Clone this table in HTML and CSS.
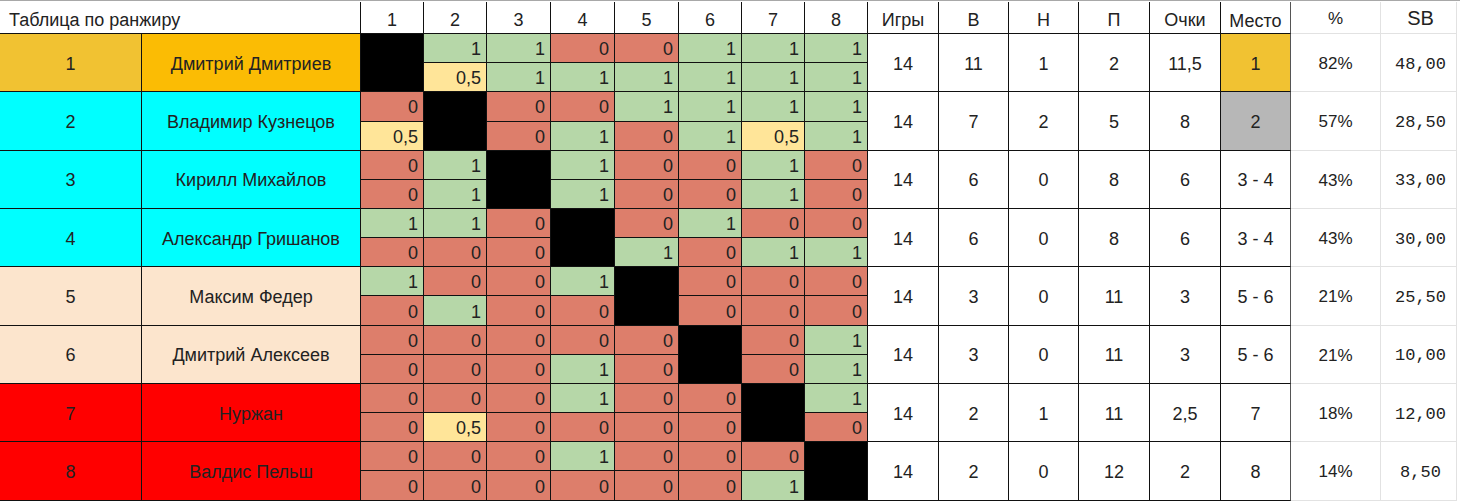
FILE: index.html
```html
<!DOCTYPE html>
<html lang="ru">
<head>
<meta charset="utf-8">
<title>Таблица по ранжиру</title>
<link rel="stylesheet" href="styles.css">
</head>
<body>
<div class="sheet">
  <div class="row hdr">
    <div class="c title">Таблица по ранжиру</div>
    <div class="c">1</div><div class="c">2</div><div class="c">3</div><div class="c">4</div>
    <div class="c">5</div><div class="c">6</div><div class="c">7</div><div class="c">8</div>
    <div class="c">Игры</div><div class="c">В</div><div class="c">Н</div><div class="c">П</div>
    <div class="c">Очки</div><div class="c place low">Место</div>
    <div class="c g">%</div><div class="c g big">SB</div>
  </div>

  <div class="row">
    <div class="c rank gold1">1</div><div class="c name gold2">Дмитрий Дмитриев</div>
    <div class="m blk"></div>
    <div class="m"><span class="s w">1</span><span class="s d">0,5</span></div>
    <div class="m"><span class="s w">1</span><span class="s w">1</span></div>
    <div class="m"><span class="s l">0</span><span class="s w">1</span></div>
    <div class="m"><span class="s l">0</span><span class="s w">1</span></div>
    <div class="m"><span class="s w">1</span><span class="s w">1</span></div>
    <div class="m"><span class="s w">1</span><span class="s w">1</span></div>
    <div class="m"><span class="s w">1</span><span class="s w">1</span></div>
    <div class="c">14</div><div class="c">11</div><div class="c">1</div><div class="c">2</div><div class="c">11,5</div>
    <div class="c place gold1">1</div><div class="c g">82%</div><div class="c g mono">48,00</div>
  </div>

  <div class="row">
    <div class="c rank cyan">2</div><div class="c name cyan">Владимир Кузнецов</div>
    <div class="m"><span class="s l">0</span><span class="s d">0,5</span></div>
    <div class="m blk"></div>
    <div class="m"><span class="s l">0</span><span class="s l">0</span></div>
    <div class="m"><span class="s l">0</span><span class="s w">1</span></div>
    <div class="m"><span class="s w">1</span><span class="s l">0</span></div>
    <div class="m"><span class="s w">1</span><span class="s w">1</span></div>
    <div class="m"><span class="s w">1</span><span class="s d">0,5</span></div>
    <div class="m"><span class="s w">1</span><span class="s w">1</span></div>
    <div class="c">14</div><div class="c">7</div><div class="c">2</div><div class="c">5</div><div class="c">8</div>
    <div class="c place silver">2</div><div class="c g">57%</div><div class="c g mono">28,50</div>
  </div>

  <div class="row">
    <div class="c rank cyan">3</div><div class="c name cyan">Кирилл Михайлов</div>
    <div class="m"><span class="s l">0</span><span class="s l">0</span></div>
    <div class="m"><span class="s w">1</span><span class="s w">1</span></div>
    <div class="m blk"></div>
    <div class="m"><span class="s w">1</span><span class="s w">1</span></div>
    <div class="m"><span class="s l">0</span><span class="s l">0</span></div>
    <div class="m"><span class="s l">0</span><span class="s l">0</span></div>
    <div class="m"><span class="s w">1</span><span class="s w">1</span></div>
    <div class="m"><span class="s l">0</span><span class="s l">0</span></div>
    <div class="c">14</div><div class="c">6</div><div class="c">0</div><div class="c">8</div><div class="c">6</div>
    <div class="c place">3 - 4</div><div class="c g">43%</div><div class="c g mono">33,00</div>
  </div>

  <div class="row">
    <div class="c rank cyan">4</div><div class="c name cyan">Александр Гришанов</div>
    <div class="m"><span class="s w">1</span><span class="s l">0</span></div>
    <div class="m"><span class="s w">1</span><span class="s l">0</span></div>
    <div class="m"><span class="s l">0</span><span class="s l">0</span></div>
    <div class="m blk"></div>
    <div class="m"><span class="s l">0</span><span class="s w">1</span></div>
    <div class="m"><span class="s w">1</span><span class="s l">0</span></div>
    <div class="m"><span class="s l">0</span><span class="s w">1</span></div>
    <div class="m"><span class="s l">0</span><span class="s w">1</span></div>
    <div class="c">14</div><div class="c">6</div><div class="c">0</div><div class="c">8</div><div class="c">6</div>
    <div class="c place">3 - 4</div><div class="c g">43%</div><div class="c g mono">30,00</div>
  </div>

  <div class="row">
    <div class="c rank peach">5</div><div class="c name peach">Максим Федер</div>
    <div class="m"><span class="s w">1</span><span class="s l">0</span></div>
    <div class="m"><span class="s l">0</span><span class="s w">1</span></div>
    <div class="m"><span class="s l">0</span><span class="s l">0</span></div>
    <div class="m"><span class="s w">1</span><span class="s l">0</span></div>
    <div class="m blk"></div>
    <div class="m"><span class="s l">0</span><span class="s l">0</span></div>
    <div class="m"><span class="s l">0</span><span class="s l">0</span></div>
    <div class="m"><span class="s l">0</span><span class="s l">0</span></div>
    <div class="c">14</div><div class="c">3</div><div class="c">0</div><div class="c">11</div><div class="c">3</div>
    <div class="c place">5 - 6</div><div class="c g">21%</div><div class="c g mono">25,50</div>
  </div>

  <div class="row">
    <div class="c rank peach">6</div><div class="c name peach">Дмитрий Алексеев</div>
    <div class="m"><span class="s l">0</span><span class="s l">0</span></div>
    <div class="m"><span class="s l">0</span><span class="s l">0</span></div>
    <div class="m"><span class="s l">0</span><span class="s l">0</span></div>
    <div class="m"><span class="s l">0</span><span class="s w">1</span></div>
    <div class="m"><span class="s l">0</span><span class="s l">0</span></div>
    <div class="m blk"></div>
    <div class="m"><span class="s l">0</span><span class="s l">0</span></div>
    <div class="m"><span class="s w">1</span><span class="s w">1</span></div>
    <div class="c">14</div><div class="c">3</div><div class="c">0</div><div class="c">11</div><div class="c">3</div>
    <div class="c place">5 - 6</div><div class="c g">21%</div><div class="c g mono">10,00</div>
  </div>

  <div class="row">
    <div class="c rank red">7</div><div class="c name red">Нуржан</div>
    <div class="m"><span class="s l">0</span><span class="s l">0</span></div>
    <div class="m"><span class="s l">0</span><span class="s d">0,5</span></div>
    <div class="m"><span class="s l">0</span><span class="s l">0</span></div>
    <div class="m"><span class="s w">1</span><span class="s l">0</span></div>
    <div class="m"><span class="s l">0</span><span class="s l">0</span></div>
    <div class="m"><span class="s l">0</span><span class="s l">0</span></div>
    <div class="m blk"></div>
    <div class="m"><span class="s w">1</span><span class="s l">0</span></div>
    <div class="c">14</div><div class="c">2</div><div class="c">1</div><div class="c">11</div><div class="c">2,5</div>
    <div class="c place">7</div><div class="c g">18%</div><div class="c g mono">12,00</div>
  </div>

  <div class="row">
    <div class="c rank red">8</div><div class="c name red">Валдис Пельш</div>
    <div class="m"><span class="s l">0</span><span class="s l">0</span></div>
    <div class="m"><span class="s l">0</span><span class="s l">0</span></div>
    <div class="m"><span class="s l">0</span><span class="s l">0</span></div>
    <div class="m"><span class="s w">1</span><span class="s l">0</span></div>
    <div class="m"><span class="s l">0</span><span class="s l">0</span></div>
    <div class="m"><span class="s l">0</span><span class="s l">0</span></div>
    <div class="m"><span class="s l">0</span><span class="s w">1</span></div>
    <div class="m blk"></div>
    <div class="c">14</div><div class="c">2</div><div class="c">0</div><div class="c">12</div><div class="c">2</div>
    <div class="c place">8</div><div class="c g">14%</div><div class="c g mono">8,50</div>
  </div>
</div>
</body>
</html>
```

FILE: styles.css
```css
* { box-sizing: border-box; }

body {
  margin: 0;
  background: #ffffff;
  font-family: "Liberation Sans", Arial, sans-serif;
  font-size: 18px;
  color: #222222;
}

.sheet {
  width: 1460px;
  padding-top: 1px;
  border-top: 1px solid #a8a8a8;
}

.row {
  display: grid;
  grid-template-columns: 142px 219px 63px 63px 64px 64px 64px 63px 63px 63px 71px 70px 70px 71px 71px 70px 90px 76px;
  height: 58.33px;
}

.row.hdr {
  height: 32px;
}

.c {
  display: flex;
  align-items: center;
  justify-content: center;
  padding-top: 3px;
  border-right: 1px solid #111;
  border-bottom: 1px solid #111;
  white-space: nowrap;
}

.hdr .c {
  padding-top: 5px;
}

.hdr .c.low {
  padding-top: 7px;
}

.c.title {
  grid-column: span 2;
  justify-content: flex-start;
  padding-left: 9px;
}

.c.place {
  border-right-color: #555;
}

.c.g {
  font-size: 17px;
  border-right-color: #e2e2e2;
  border-bottom-color: #e2e2e2;
}

.hdr .c.g {
  padding-top: 2px;
}

.hdr .c.big {
  font-size: 20px;
  padding-left: 4px;
}

.c.mono {
  font-family: "Liberation Mono", "Courier New", monospace;
  font-size: 17px;
  padding-left: 4px;
}

.m {
  display: flex;
  flex-direction: column;
  border-right: 1px solid #111;
  border-bottom: 1px solid #111;
}

.m.blk {
  background: #000000;
}

.s {
  flex: 1;
  display: flex;
  align-items: center;
  justify-content: flex-end;
  padding: 3px 5px 0 0;
}

.s:first-child {
  border-bottom: 1px solid #111;
}

.w { background: #b6d7a8; }
.l { background: #dd7e6b; }
.d { background: #ffe599; }

.gold1 { background: #f1c232; }
.gold2 { background: #fbbc04; }
.cyan { background: #00ffff; }
.peach { background: #fce5cd; }
.red { background: #ff0000; }
.silver { background: #b7b7b7; }
```
